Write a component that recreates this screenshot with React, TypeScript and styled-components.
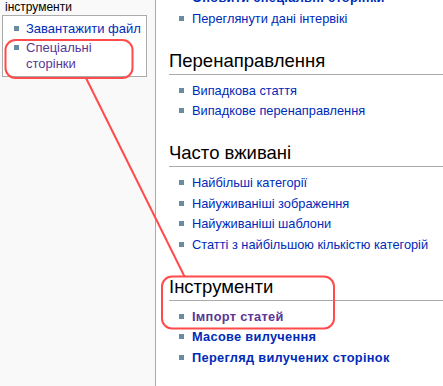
import React from "react";
import styled, { createGlobalStyle } from "styled-components";

const Global = createGlobalStyle`
  html, body { margin: 0; padding: 0; background: #fff; }
  body { font-family: "Liberation Sans", Arial, sans-serif; }
  * { box-sizing: border-box; }
`;

const Page = styled.div`
  position: relative;
  display: flex;
  width: 443px;
  height: 386px;
  overflow: hidden;
`;

const Sidebar = styled.aside`
  width: 156px;
  flex: none;
  background: #f9f9f9;
  border-right: 1px solid #aaa;
`;

const PortletTitle = styled.div`
  font-size: 12px;
  line-height: 14px;
  color: #000;
  padding-left: 5px;
`;

const PortletBox = styled.div`
  margin: 1px 0 0 2px;
  width: 145px;
  background: #fff;
  border: 1px solid #aaa;
  padding: 5px 4px 1px 0;
`;

const SideList = styled.ul`
  list-style: none;
  margin: 0;
  padding: 0 0 0 23px;
`;

const SideItem = styled.li<{ $visited?: boolean; $wrap?: boolean }>`
  font-size: 13px;
  line-height: 16px;
  padding-bottom: 3px;
  white-space: ${(p) => (p.$wrap ? "normal" : "nowrap")};
  color: ${(p) => (p.$visited ? "#5a3696" : "#002bb8")};
  &::before {
    content: "";
    display: inline-block;
    width: 5px;
    height: 5px;
    background: #6a8ca0;
    margin-left: -12px;
    margin-right: 7px;
    vertical-align: 2px;
  }
`;

const Content = styled.main`
  flex: 1;
  background: #fff;
  padding-left: 13px;
`;

const Heading = styled.h2`
  margin: 22px 0 0;
  padding: 0 0 2px;
  font-size: 18.5px;
  line-height: 22px;
  font-weight: normal;
  color: #000;
  border-bottom: 1px solid #aaa;
`;

const List = styled.ul<{ $first?: boolean }>`
  list-style: none;
  margin: ${(p) => (p.$first ? "-12px" : "6px")} 0 0;
  padding: 0 0 0 23px;
`;

const Item = styled.li<{ $bold?: boolean; $visited?: boolean }>`
  font-size: 12.8px;
  line-height: 19px;
  margin-bottom: 1.5px;
  white-space: nowrap;
  font-weight: ${(p) => (p.$bold ? "bold" : "normal")};
  letter-spacing: ${(p) => (p.$bold ? "0.3px" : "0")};
  color: ${(p) => (p.$visited ? "#5a3696" : "#002bb8")};
  &::before {
    content: "";
    display: inline-block;
    width: 5px;
    height: 5px;
    background: #6a8ca0;
    margin-left: -13px;
    margin-right: 8px;
    vertical-align: 2px;
  }
`;

const Annotations = styled.svg`
  position: absolute;
  left: 0;
  top: 0;
  pointer-events: none;
`;

type Entry = { text: string; bold?: boolean; visited?: boolean };

const sections: { title: string; items: Entry[] }[] = [
  {
    title: "Перенаправлення",
    items: [{ text: "Випадкова стаття" }, { text: "Випадкове перенаправлення" }],
  },
  {
    title: "Часто вживані",
    items: [
      { text: "Найбільші категорії" },
      { text: "Найуживаніші зображення" },
      { text: "Найуживаніші шаблони" },
      { text: "Статті з найбільшою кількістю категорій" },
    ],
  },
  {
    title: "Інструменти",
    items: [
      { text: "Імпорт статей", bold: true, visited: true },
      { text: "Масове вилучення", bold: true },
      { text: "Перегляд вилучених сторінок", bold: true },
    ],
  },
];

export default function App() {
  return (
    <>
      <Global />
      <Page>
        <Sidebar>
          <PortletTitle>інструменти</PortletTitle>
          <PortletBox>
            <SideList>
              <SideItem>Завантажити файл</SideItem>
              <SideItem $visited $wrap>
                Спеціальні сторінки
              </SideItem>
            </SideList>
          </PortletBox>
        </Sidebar>
        <Content>
          <List $first>
            <Item $bold>Оновити спеціальні сторінки</Item>
            <Item>Переглянути дані інтервікі</Item>
          </List>
          {sections.map((s) => (
            <React.Fragment key={s.title}>
              <Heading>{s.title}</Heading>
              <List>
                {s.items.map((it) => (
                  <Item key={it.text} $bold={it.bold} $visited={it.visited}>
                    {it.text}
                  </Item>
                ))}
              </List>
            </React.Fragment>
          ))}
        </Content>
        <Annotations width="443" height="386" viewBox="0 0 443 386">
          <g fill="none" stroke="#ff4b4b" strokeWidth="2">
            <rect x="5.5" y="40" width="127" height="38" rx="10" />
            <line x1="86" y1="78" x2="184.5" y2="276.5" />
            <rect x="162" y="276.5" width="172" height="52" rx="10" />
          </g>
        </Annotations>
      </Page>
    </>
  );
}
